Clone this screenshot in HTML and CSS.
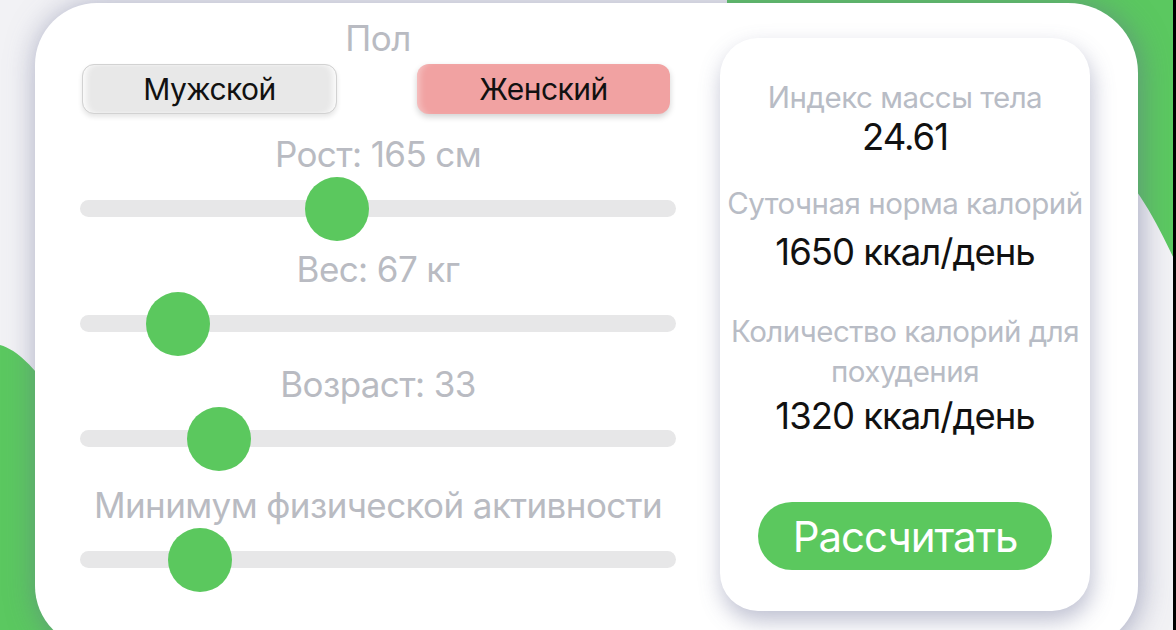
FILE: index.html
```html
<!DOCTYPE html>
<html>
<head>
  <meta charset="UTF-8">
  <title>Калькулятор калорий</title>
  <link rel="stylesheet" href="styles.css">
</head>
<body>
  <svg class="backdrop" width="1176" height="630" viewBox="0 0 1176 630">
    <path d="M727 0 H1176 V263 C1160 230 1140 185 1100 150 L727 40 Z" fill="#5bc860"/>
    <path d="M0 345 C18 350 34 368 52 392 L52 560 L220 630 L0 630 Z" fill="#5bc860"/>
  </svg>

  <div class="card">
    <div class="form">
      <div class="label">Пол</div>
      <div class="gender">
        <button class="gender-btn">Мужской</button>
        <button class="gender-btn selected">Женский</button>
      </div>

      <div class="group">
        <div class="label">Рост: 165 см</div>
        <div class="track"><span class="thumb" style="left: 43.1%"></span></div>
      </div>
      <div class="group">
        <div class="label">Вес: 67 кг</div>
        <div class="track"><span class="thumb" style="left: 16.4%"></span></div>
      </div>
      <div class="group">
        <div class="label">Возраст: 33</div>
        <div class="track"><span class="thumb" style="left: 23.3%"></span></div>
      </div>
      <div class="group">
        <div class="label">Минимум физической активности</div>
        <div class="track"><span class="thumb" style="left: 20.1%"></span></div>
      </div>
    </div>

    <div class="results">
      <div class="res-label">Индекс массы тела</div>
      <div class="res-value">24.61</div>
      <div class="res-label second">Суточная норма калорий</div>
      <div class="res-value gap">1650 ккал/день</div>
      <div class="res-label third">Количество калорий для<br>похудения</div>
      <div class="res-value tight">1320 ккал/день</div>
      <button class="calc">Рассчитать</button>
    </div>
  </div>
</body>
</html>
```

FILE: styles.css
```css
html {
  background-color: #000;
}
body {
  margin: 0;
  width: 1173px;
  height: 630px;
  overflow: hidden;
  position: relative;
  background-color: #f2f2f5;
  font-family: Inter, "Noto Sans", sans-serif;
}
.backdrop {
  position: absolute;
  top: 0;
  left: 0;
}
.card {
  position: relative;
  display: flex;
  align-items: flex-start;
  margin: 3px 0 0 35px;
  width: 1103px;
  height: 645px;
  box-sizing: border-box;
  padding: 15px 48px 0 45px;
  background-color: white;
  border-radius: 62px 70px 62px 62px;
  box-shadow: 2px 2px 30px rgba(100,105,145,0.55);
}
.form {
  width: 596px;
  display: flex;
  flex-direction: column;
}
.label {
  height: 40px;
  line-height: 40px;
  text-align: center;
  font-size: 35px;
  letter-spacing: -0.6px;
  white-space: nowrap;
  color: #b9bbc2;
}
.gender {
  display: flex;
  justify-content: space-between;
  margin-top: 6px;
  padding: 0 6px 0 2px;
}
.gender-btn {
  width: 255px;
  height: 50px;
  border-radius: 12px;
  font-family: inherit;
  font-size: 30px;
  letter-spacing: -0.5px;
  color: #111;
  cursor: pointer;
  border: 1px solid #d2d2d2;
  background-color: #e8e8e8;
  box-shadow: inset 6px 0 6px -3px rgba(255,255,255,0.9), inset -6px 0 6px -3px rgba(255,255,255,0.9), 0 3px 5px rgba(0,0,0,0.1);
}
.gender-btn.selected {
  width: 253px;
  border: none;
  background-color: #f1a2a2;
  box-shadow: inset 7px 0 6px -4px rgba(255,255,255,0.35), 0 3px 6px rgba(0,0,0,0.18);
}
.group {
  margin-top: 20px;
}
.group + .group {
  margin-top: 32px;
}
.group:last-child {
  margin-top: 38px;
}
.track {
  position: relative;
  margin-top: 26px;
  height: 17px;
  border-radius: 9px;
  background-color: #e7e7e8;
}
.thumb {
  position: absolute;
  top: 50%;
  width: 64px;
  height: 64px;
  border-radius: 50%;
  background-color: #5bc85e;
  transform: translate(-50%, -50%);
}
.results {
  margin: 20px 0 0 44px;
  width: 370px;
  height: 573px;
  box-sizing: border-box;
  padding-top: 39px;
  display: flex;
  flex-direction: column;
  align-items: center;
  background-color: white;
  border-radius: 38px;
  box-shadow: 2px 10px 22px rgba(100,105,145,0.42);
}
.res-label {
  line-height: 40px;
  text-align: center;
  font-size: 29.5px;
  letter-spacing: -0.5px;
  white-space: nowrap;
  color: #b8bcc5;
}
.res-label.second {
  margin-top: 26px;
}
.res-label.third {
  margin-top: 39px;
}
.res-value {
  line-height: 40px;
  font-size: 36.5px;
  letter-spacing: -1px;
  color: #111;
}
.res-value.gap {
  margin-top: 9px;
}
.res-value.tight {
  margin-top: 5px;
}
.calc {
  margin-top: 66px;
  width: 294px;
  height: 68px;
  border: none;
  border-radius: 34px;
  background-color: #5bc85e;
  color: white;
  font-family: inherit;
  font-size: 42px;
  letter-spacing: -1px;
  cursor: pointer;
}
```
